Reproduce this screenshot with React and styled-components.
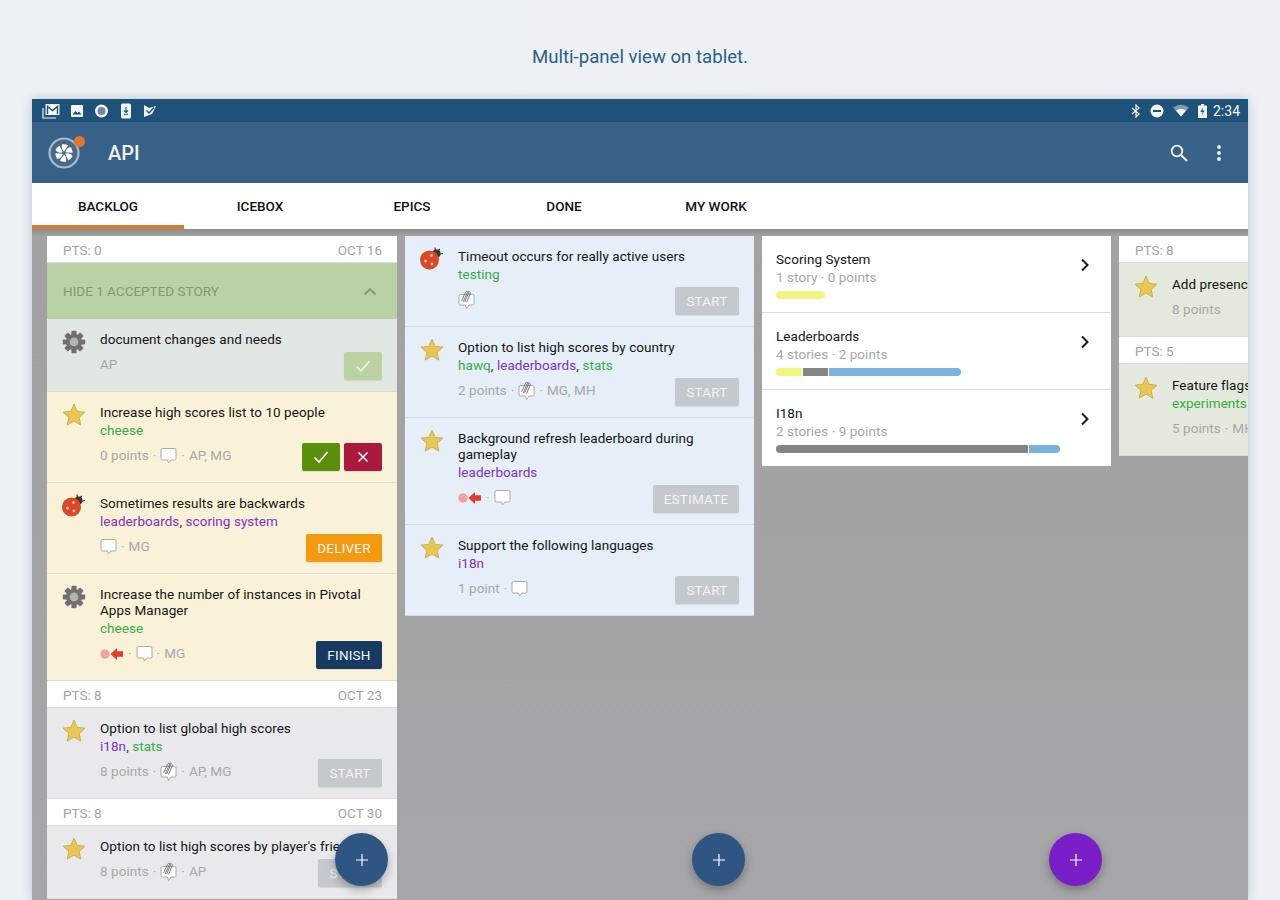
import React from 'react';
import styled, { createGlobalStyle } from 'styled-components';

const Global = createGlobalStyle`
  html, body { margin: 0; padding: 0; height: 100%; overflow: hidden; background: #ecf1f5; }
  body { font-family: Roboto, "Liberation Sans", sans-serif; -webkit-font-smoothing: antialiased; }
  * { box-sizing: border-box; }
`;

const Page = styled.div`
  height: 900px;
  padding: 0 32px;
  display: flex;
  flex-direction: column;
  overflow: hidden;
  background: linear-gradient(90deg, #ecf1f4 0%, #edf1f6 100%);
`;
const Caption = styled.h1`
  margin: 0;
  height: 99px;
  padding-top: 46px;
  text-align: center;
  font-size: 18.6px;
  line-height: 22px;
  font-weight: 400;
  color: #2b6089;
`;
const Device = styled.div`
  flex: 1;
  min-height: 0;
  display: flex;
  flex-direction: column;
  overflow: hidden;
  box-shadow: 0 0 10px rgba(70, 90, 120, 0.28);
`;
const StatusBar = styled.div`
  height: 23px;
  flex: none;
  background: #1f5279;
  display: flex;
  align-items: center;
  justify-content: space-between;
  padding: 0 8px 0 10px;
  color: #f2f6f9;
`;
const StatusGroup = styled.div`
  display: flex;
  align-items: center;
  gap: ${p => p.$gap}px;
`;
const Clock = styled.span`
  font-size: 14px;
  font-weight: 400;
  margin-left: -3px;
`;
const AppBar = styled.header`
  height: 61px;
  flex: none;
  background: #376186;
  display: flex;
  align-items: center;
  padding: 0 27px 0 16px;
  color: #fff;
`;
const LogoWrap = styled.div`
  position: relative;
  width: 32px;
  height: 32px;
  flex: none;
`;
const Dot = styled.span`
  position: absolute;
  right: -5px;
  top: -1px;
  width: 11px;
  height: 11px;
  border-radius: 50%;
  background: #e8742a;
`;
const AppTitle = styled.div`
  font-size: 20px;
  font-weight: 500;
  margin-left: 28px;
  padding-top: 1px;
  flex: 1;
  color: #eef3f7;
`;
const AppActions = styled.div`
  display: flex;
  align-items: center;
  gap: 29px;
`;
const Tabs = styled.nav`
  height: 46px;
  flex: none;
  display: flex;
  background: #fff;
  position: relative;
  z-index: 2;
`;
const Tab = styled.div`
  width: 152px;
  display: flex;
  align-items: center;
  justify-content: center;
  font-size: 13.5px;
  font-weight: 500;
  color: #111;
  border-bottom: 4px solid ${p => (p.$active ? '#d97a2f' : 'transparent')};
  border-top: 4px solid transparent;
`;
const Board = styled.main`
  flex: 1;
  min-height: 0;
  display: flex;
  align-items: flex-start;
  gap: 8px;
  padding: 7px 0 0 15px;
  overflow: hidden;
  background: linear-gradient(180deg, #8c8c8c 0, #a2a2a2 7px, #a6a5a7 100%);
  position: relative;
`;
const Column = styled.section`
  width: ${p => p.$w || 349}px;
  flex: none;
`;
const IterationHead = styled.div`
  height: 27px;
  background: #fff;
  display: flex;
  justify-content: space-between;
  align-items: center;
  padding: 1px 15px 0 16px;
  font-size: 13.5px;
  color: #a3a3a3;
  border-bottom: 1px solid #dcdcdc;
`;
const HideBar = styled.div`
  height: 56px;
  background: #b9d2a5;
  display: flex;
  justify-content: space-between;
  align-items: center;
  padding: 0 20px 0 16px;
  font-size: 13.5px;
  color: #7f9a74;
`;
const Story = styled.article`
  background: ${p => p.$bg};
  display: flex;
  padding: ${p => 12 + (p.$extra || 0)}px 15px 11px 15px;
  border-bottom: 1px solid ${p => p.$line || '#dcdcd8'};
`;
const StoryIcon = styled.div`
  width: 38px;
  flex: none;
  margin-top: -1px;
`;
const StoryBody = styled.div`
  flex: 1;
  min-width: 0;
`;
const StoryTitle = styled.div`
  font-size: 13.5px;
  line-height: 16px;
  color: #151515;
  white-space: ${p => (p.$nowrap ? 'nowrap' : 'normal')};
  letter-spacing: 0.05px;
`;
const Labels = styled.div`
  margin: 2px 0 -1px;
  font-size: 13.5px;
  line-height: 17px;
  color: #333;
  letter-spacing: 0.05px;
`;
const Label = styled.span`
  color: ${p => (p.$kind === 'epic' ? '#8331bd' : '#37ad43')};
`;
const Footer = styled.div`
  display: flex;
  justify-content: space-between;
  align-items: flex-start;
  margin-top: 5px;
  min-height: 28px;
`;
const Meta = styled.div`
  height: 24px;
  display: flex;
  align-items: center;
  gap: 4px;
  font-size: 13.5px;
  color: #a8a8a8;
  letter-spacing: 0.05px;
  svg {
    margin-top: 2px;
  }
`;
const Actions = styled.div`
  display: flex;
  gap: 4px;
`;
const Action = styled.div`
  height: 28px;
  width: ${p => p.$w || 38}px;
  border-radius: 2px;
  background: ${p => p.$bg};
  color: ${p => p.$fg || '#f2f4f6'};
  display: flex;
  align-items: center;
  justify-content: center;
  font-size: 13.5px;
  letter-spacing: 0.2px;
  box-shadow: 0 1px 1px rgba(0, 0, 0, 0.08);
`;
const EpicList = styled.section`
  width: 349px;
  flex: none;
  background: #fff;
`;
const Epic = styled.div`
  height: ${p => (p.$last ? 76 : 77)}px;
  padding: 14px 21px 0 14px;
  display: flex;
  justify-content: space-between;
  border-bottom: 1px solid ${p => (p.$last ? 'transparent' : '#dcdcdc')};
`;
const EpicName = styled.div`
  font-size: 13.5px;
  line-height: 18px;
  color: #161616;
  letter-spacing: 0.05px;
`;
const EpicSub = styled.div`
  font-size: 13.5px;
  line-height: 18px;
  color: #a8a8a8;
  letter-spacing: 0.05px;
`;
const Bar = styled.div`
  display: flex;
  gap: 1px;
  height: 8px;
  margin-top: 5px;
  border-radius: 4px;
  overflow: hidden;
  width: fit-content;
`;
const Seg = styled.span`
  display: block;
  background: ${p => p.$c};
`;
const Fab = styled.button`
  position: absolute;
  top: 604px;
  width: 53px;
  height: 53px;
  border: 0;
  border-radius: 50%;
  background: ${p => p.$bg};
  box-shadow: 0 4px 8px rgba(0, 0, 0, 0.28);
  display: flex;
  align-items: center;
  justify-content: center;
  padding: 0;
`;

const Star = () => (
  <svg width="24" height="24" viewBox="0 0 24 24">
    <path d="M12 1.2l3.2 7.2 7.8.8-5.9 5.2 1.7 7.7L12 18.1l-6.8 4 1.7-7.7L1 9.2l7.8-.8z" fill="#e9c757" stroke="#cfae49" strokeWidth="1" strokeLinejoin="round" />
  </svg>
);
const Gear = () => (
  <svg width="24" height="24" viewBox="0 0 24 24">
    <g fill="#707070">
      {[0, 45, 90, 135].map(a => (
        <rect key={a} x="9.4" y="0.8" width="5.2" height="22.4" rx="1" transform={`rotate(${a} 12 12)`} />
      ))}
    </g>
    <circle cx="12" cy="12" r="8" fill="#707070" />
    <circle cx="12" cy="12" r="4.4" fill="#b5b5b0" />
  </svg>
);
const Bug = () => (
  <svg width="24" height="24" viewBox="0 0 24 24">
    <path d="M16 5l4-3M18 7.500l5-1M15.500 4l-.5-3.500" stroke="#333" strokeWidth="1.200" fill="none" />
    <circle cx="16.500" cy="6.500" r="4" fill="#3a3430" />
    <circle cx="9.500" cy="13" r="9.500" fill="#d8492a" />
    <circle cx="5.500" cy="14" r="1.500" fill="#f2b9a8" />
    <circle cx="11.500" cy="8.500" r="1.400" fill="#f2b9a8" />
    <circle cx="12" cy="17" r="1.400" fill="#f2b9a8" />
  </svg>
);
const Comment = () => (
  <svg width="17" height="18" viewBox="0 0 17 18">
    <path d="M2.500 1.500h12a1.500 1.500 0 0 1 1.500 1.500v8.500a1.500 1.500 0 0 1-1.500 1.500H11l-2.500 3-1-3h-5A1.500 1.500 0 0 1 1 11.500V3a1.500 1.500 0 0 1 1.500-1.500z" fill="#fff" stroke="#a9a9a9" strokeWidth="1" />
  </svg>
);
const ClipComment = () => (
  <svg width="17" height="20" viewBox="0 0 17 20">
    <path d="M2.500 4.500h12A1.500 1.500 0 0 1 16 6v7.500A1.500 1.500 0 0 1 14.500 15H11l-2.500 3.500-1-3.500h-5A1.500 1.500 0 0 1 1 13.500V6a1.500 1.500 0 0 1 1.500-1.500z" fill="#fff" stroke="#a9a9a9" strokeWidth="1" />
    <g fill="none" stroke="#6a6a6a" strokeWidth="0.900" strokeLinecap="round">
      <path d="M3.800 10.500L7.500 2.300a1.600 1.600 0 0 1 2.900 1.300L6.900 11.600" />
      <path d="M5.400 11.600L9.400 2.500a1.600 1.600 0 0 1 2.900 1.300l-3.600 8.300" />
    </g>
  </svg>
);
const Blocker = () => (
  <svg width="24" height="14" viewBox="0 0 24 14">
    <circle cx="5" cy="7" r="4.700" fill="#f3a3a3" />
    <path d="M23 4.200H17V1L10.500 7l6.500 6V9.800h6z" fill="#e33a2e" />
  </svg>
);
const Check = ({ c = '#fff' }) => (
  <svg width="16" height="14" viewBox="0 0 16 14">
    <path d="M1.500 7.500l4.500 4.500 8.500-10" fill="none" stroke={c} strokeWidth="1.600" />
  </svg>
);
const Cross = () => (
  <svg width="12" height="12" viewBox="0 0 12 12">
    <path d="M1.500 1.500l9 9M10.500 1.500l-9 9" stroke="#fff" strokeWidth="1.500" />
  </svg>
);
const Chevron = () => (
  <svg width="10" height="14" viewBox="0 0 10 14" style={{ marginTop: 8 }}>
    <path d="M2 1.500L7.500 7 2 12.500" fill="none" stroke="#1b1b1b" strokeWidth="2" />
  </svg>
);
const ChevronUp = () => (
  <svg width="14" height="9" viewBox="0 0 14 9">
    <path d="M1.500 7.500L7 2l5.500 5.500" fill="none" stroke="#7f9a74" strokeWidth="1.800" />
  </svg>
);
const Plus = () => (
  <svg width="14" height="14" viewBox="0 0 14 14">
    <path d="M7 1v12M1 7h12" stroke="#fff" strokeWidth="1.200" />
  </svg>
);
const Logo = () => (
  <svg width="32" height="32" viewBox="0 0 32 32">
    <circle cx="16" cy="16" r="14.500" fill="#47698a" stroke="#a7bccd" strokeWidth="2.200" />
    <g fill="#fff">
      {[0, 60, 120, 180, 240, 300].map(a => (
        <path key={a} d="M16 14.500c-2.500-2-3-5.500-1.500-7.500 2 .2 4.500.5 5.500 1.500-1 2-2.500 4-4 6z" transform={`rotate(${a} 16 16)`} />
      ))}
    </g>
  </svg>
);
const StatusIcons = () => (
  <StatusGroup $gap={10}>
    <svg width="18" height="16" viewBox="0 0 18 16">
      <path d="M1 5v10h13" fill="none" stroke="#f2f6f9" strokeWidth="1.200" />
      <rect x="3.500" y="1" width="14" height="11" fill="#f2f6f9" />
      <path d="M5.500 11V3.500l5 4 5-4V11" fill="none" stroke="#1f5279" strokeWidth="1.400" />
    </svg>
    <svg width="14" height="14" viewBox="0 0 14 14">
      <rect x="1" y="1" width="12" height="12" rx="1" fill="#f2f6f9" />
      <path d="M2.500 10.500l3-3.500 2 2 1.500-1.500 2.500 3z" fill="#1f5279" />
    </svg>
    <svg width="15" height="14" viewBox="0 0 14 14">
      <circle cx="7" cy="7" r="6.500" fill="#f2f6f9" />
      <circle cx="7" cy="7" r="4" fill="#6f88ad" />
    </svg>
    <svg width="14" height="16" viewBox="0 0 12 16">
      <rect x="1" y="0.500" width="10" height="15" rx="1.500" fill="#f2f6f9" />
      <path d="M6 4v5M4 7.500l2 2 2-2M3.800 11.300h4.400" fill="none" stroke="#1f5279" strokeWidth="1.100" />
    </svg>
    <svg width="14" height="14" viewBox="0 0 14 14">
      <path d="M1 1l5 3 7-2-4 8-8 3z" fill="#f2f6f9" />
      <path d="M3.500 6.500l2.500 2.500L11 3.500" fill="none" stroke="#1f5279" strokeWidth="1.300" />
    </svg>
  </StatusGroup>
);
const StatusRight = () => (
  <StatusGroup $gap={9}>
    <svg width="10" height="14" viewBox="0 0 10 14">
      <path d="M1 4l7 6-3 3V1l3 3-7 6" fill="none" stroke="#f2f6f9" strokeWidth="1.200" />
    </svg>
    <svg width="14" height="14" viewBox="0 0 14 14">
      <circle cx="7" cy="7" r="6.500" fill="#f2f6f9" />
      <rect x="3" y="6" width="8" height="2" fill="#1f5279" />
    </svg>
    <svg width="16" height="13" viewBox="0 0 16 13">
      <path d="M0 3.500Q8-2 16 3.500L8 12.500z" fill="#f2f6f9" opacity="0.45" />
      <path d="M3 6.500Q8 3 13 6.500L8 12.500z" fill="#f2f6f9" />
    </svg>
    <svg width="9" height="14" viewBox="0 0 9 14">
      <path d="M3 0h3v1.500h3V14H0V1.500h3z" fill="#f2f6f9" />
      <path d="M5 3L2.500 8H4.500L3.800 11.500 6.500 6.500H4.500z" fill="#1f5279" />
    </svg>
    <Clock>2:34</Clock>
  </StatusGroup>
);

const YEL = '#f9f2d9';
const BLU = '#e6eef8';
const GRY = '#e9e9ec';
const GRN = '#e3e9dc';
const ICONS = { star: <Star />, gear: <Gear />, bug: <Bug /> };
const btn = {
  start: <Action $w={64} $bg="#c4c9ce">START</Action>,
  estimate: <Action $w={86} $bg="#c4c9ce">ESTIMATE</Action>,
  deliver: <Action $w={76} $bg="#f39a11">DELIVER</Action>,
  finish: <Action $w={66} $bg="#173a62">FINISH</Action>,
  accepted: <Action $bg="#bdd2a2"><Check c="#eef4e2" /></Action>,
  review: (
    <Actions>
      <Action $bg="#5c8e0e"><Check /></Action>
      <Action $bg="#a81b3c"><Cross /></Action>
    </Actions>
  ),
};

const StoryCard = ({ s, bg, line }) => (
  <Story $bg={s.bg || bg} $line={line} $extra={s.extra}>
    <StoryIcon>{ICONS[s.icon]}</StoryIcon>
    <StoryBody>
      <StoryTitle $nowrap={s.nowrap}>{s.title}</StoryTitle>
      {s.labels && (
        <Labels>
          {s.labels.map((l, i) => (
            <React.Fragment key={l[0]}>
              {i > 0 && ', '}
              <Label $kind={l[1]}>{l[0]}</Label>
            </React.Fragment>
          ))}
        </Labels>
      )}
      <Footer>
        <Meta>
          {s.meta.map((m, i) => (
            <React.Fragment key={i}>
              {i > 0 && <span>·</span>}
              {m === 'c' ? <Comment /> : m === 'a' ? <ClipComment /> : m === 'b' ? <Blocker /> : <span>{m}</span>}
            </React.Fragment>
          ))}
        </Meta>
        {s.btn && btn[s.btn]}
      </Footer>
    </StoryBody>
  </Story>
);

const Head = ({ pts, date }) => (
  <IterationHead>
    <span>PTS: {pts}</span>
    {date && <span>{date}</span>}
  </IterationHead>
);

const G = 'label';
const E = 'epic';

const epics = [
  { name: 'Scoring System', sub: '1 story · 0 points', seg: [['#f0f77e', 49]] },
  { name: 'Leaderboards', sub: '4 stories · 2 points', seg: [['#f0f77e', 26], ['#858585', 25], ['#79b2df', 132]] },
  { name: 'I18n', sub: '2 stories · 9 points', seg: [['#858585', 252], ['#79b2df', 31]] },
];

export default function App() {
  return (
    <Page>
      <Global />
      <Caption>Multi-panel view on tablet.</Caption>
      <Device>
        <StatusBar>
          <StatusIcons />
          <StatusRight />
        </StatusBar>
        <AppBar>
          <LogoWrap>
            <Logo />
            <Dot />
          </LogoWrap>
          <AppTitle>API</AppTitle>
          <AppActions>
            <svg width="18" height="18" viewBox="0 0 18 18">
              <circle cx="7" cy="7" r="5.300" fill="none" stroke="#eef3f7" strokeWidth="1.800" />
              <path d="M11 11l6 6" stroke="#eef3f7" strokeWidth="2" />
            </svg>
            <svg width="4" height="16" viewBox="0 0 4 16">
              <circle cx="2" cy="2" r="1.900" fill="#eef3f7" />
              <circle cx="2" cy="8" r="1.900" fill="#eef3f7" />
              <circle cx="2" cy="14" r="1.900" fill="#eef3f7" />
            </svg>
          </AppActions>
        </AppBar>
        <Tabs>
          <Tab $active>BACKLOG</Tab>
          <Tab>ICEBOX</Tab>
          <Tab>EPICS</Tab>
          <Tab>DONE</Tab>
          <Tab>MY WORK</Tab>
        </Tabs>
        <Board>
          <Column $w={350}>
            <Head pts="0" date="OCT 16" />
            <HideBar>
              <span>HIDE 1 ACCEPTED STORY</span>
              <ChevronUp />
            </HideBar>
            <StoryCard bg="#e1e7e2" line="#d8dcd4" s={{ icon: 'gear', title: 'document changes and needs', meta: ['AP'], btn: 'accepted' }} />
            <StoryCard bg={YEL} s={{ icon: 'star', title: 'Increase high scores list to 10 people', labels: [['cheese', G]], meta: ['0 points', 'c', 'AP, MG'], btn: 'review' }} />
            <StoryCard bg={YEL} s={{ icon: 'bug', title: 'Sometimes results are backwards', labels: [['leaderboards', E], ['scoring system', E]], meta: ['c', 'MG'], btn: 'deliver' }} />
            <StoryCard bg={YEL} s={{ icon: 'gear', title: 'Increase the number of instances in Pivotal Apps Manager', labels: [['cheese', G]], meta: ['b', 'c', 'MG'], btn: 'finish' }} />
            <Head pts="8" date="OCT 23" />
            <StoryCard bg={GRY} s={{ icon: 'star', title: 'Option to list global high scores', labels: [['i18n', E], ['stats', G]], meta: ['8 points', 'a', 'AP, MG'], btn: 'start' }} />
            <Head pts="8" date="OCT 30" />
            <StoryCard bg={GRY} s={{ icon: 'star', title: "Option to list high scores by player's friends", meta: ['8 points', 'a', 'AP'], btn: 'start' }} />
          </Column>
          <Column>
            <StoryCard bg={BLU} line="#d3dbe3" s={{ icon: 'bug', title: 'Timeout occurs for really active users', labels: [['testing', G]], meta: ['a'], btn: 'start' }} />
            <StoryCard bg={BLU} line="#d3dbe3" s={{ icon: 'star', title: 'Option to list high scores by country', labels: [['hawq', G], ['leaderboards', E], ['stats', G]], meta: ['2 points', 'a', 'MG, MH'], btn: 'start' }} />
            <StoryCard bg={BLU} line="#d3dbe3" s={{ icon: 'star', title: 'Background refresh leaderboard during gameplay', labels: [['leaderboards', E]], meta: ['b', 'c'], btn: 'estimate' }} />
            <StoryCard bg={BLU} line="#d3dbe3" s={{ icon: 'star', title: 'Support the following languages', labels: [['i18n', E]], meta: ['1 point', 'c'], btn: 'start' }} />
          </Column>
          <EpicList>
            {epics.map((e, i) => (
              <Epic key={e.name} $last={i === epics.length - 1}>
                <div>
                  <EpicName>{e.name}</EpicName>
                  <EpicSub>{e.sub}</EpicSub>
                  <Bar>
                    {e.seg.map(([c, w]) => (
                      <Seg key={c} $c={c} style={{ width: w }} />
                    ))}
                  </Bar>
                </div>
                <Chevron />
              </Epic>
            ))}
          </EpicList>
          <Column $w={350}>
            <Head pts="8" />
            <StoryCard bg={GRN} s={{ icon: 'star', extra: 1, title: 'Add presence', nowrap: true, meta: ['8 points'] }} />
            <Head pts="5" />
            <StoryCard bg={GRN} s={{ icon: 'star', extra: 1, title: 'Feature flags', nowrap: true, labels: [['experiments', G]], meta: ['5 points', 'MH'] }} />
          </Column>
          <Fab $bg="#2f5583" style={{ left: 303 }}><Plus /></Fab>
          <Fab $bg="#2f5583" style={{ left: 660 }}><Plus /></Fab>
          <Fab $bg="#7a1fc8" style={{ left: 1017 }}><Plus /></Fab>
        </Board>
      </Device>
    </Page>
  );
}
